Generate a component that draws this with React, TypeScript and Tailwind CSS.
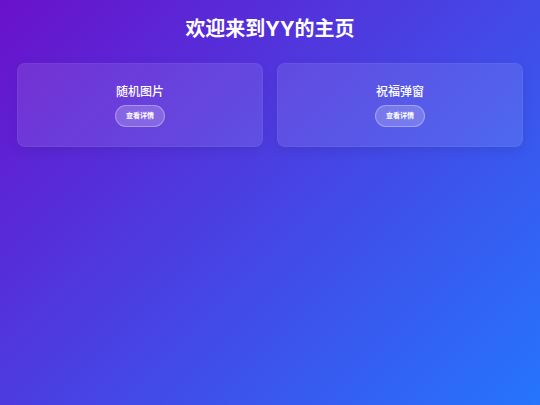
const cards = [
  { id: 'random-image', title: '随机图片' },
  { id: 'blessing-popup', title: '祝福弹窗' },
];

export default function App() {
  return (
    <div
      className="min-h-[405px] w-full bg-[linear-gradient(135deg,#6a11cb_0%,#2575fc_100%)] px-[17px] pt-[17px] text-white"
      style={{ fontFamily: 'Inter, "Noto Sans CJK SC", "Noto Sans", sans-serif' }}
    >
      {/* Header */}
      <h1 className="text-center text-[20px] font-bold leading-[24px]">欢迎来到YY的主页</h1>

      {/* Cards */}
      <div className="mt-[22px] grid grid-cols-2 gap-[14px]">
        {cards.map((card) => (
          <div
            key={card.id}
            className="flex h-[84px] flex-col items-center justify-center rounded-[8px] border border-white/5 bg-white/10 shadow-[0_4px_12px_rgba(0,0,0,0.08)]"
          >
            <h3 className="text-[12px] font-medium leading-[16px]">{card.title}</h3>
            <button className="mt-[5px] rounded-full border border-white/30 bg-white/20 px-[10px] py-[6px] text-[7px] font-bold leading-[8px] text-white">
              查看详情
            </button>
          </div>
        ))}
      </div>
    </div>
  );
}
